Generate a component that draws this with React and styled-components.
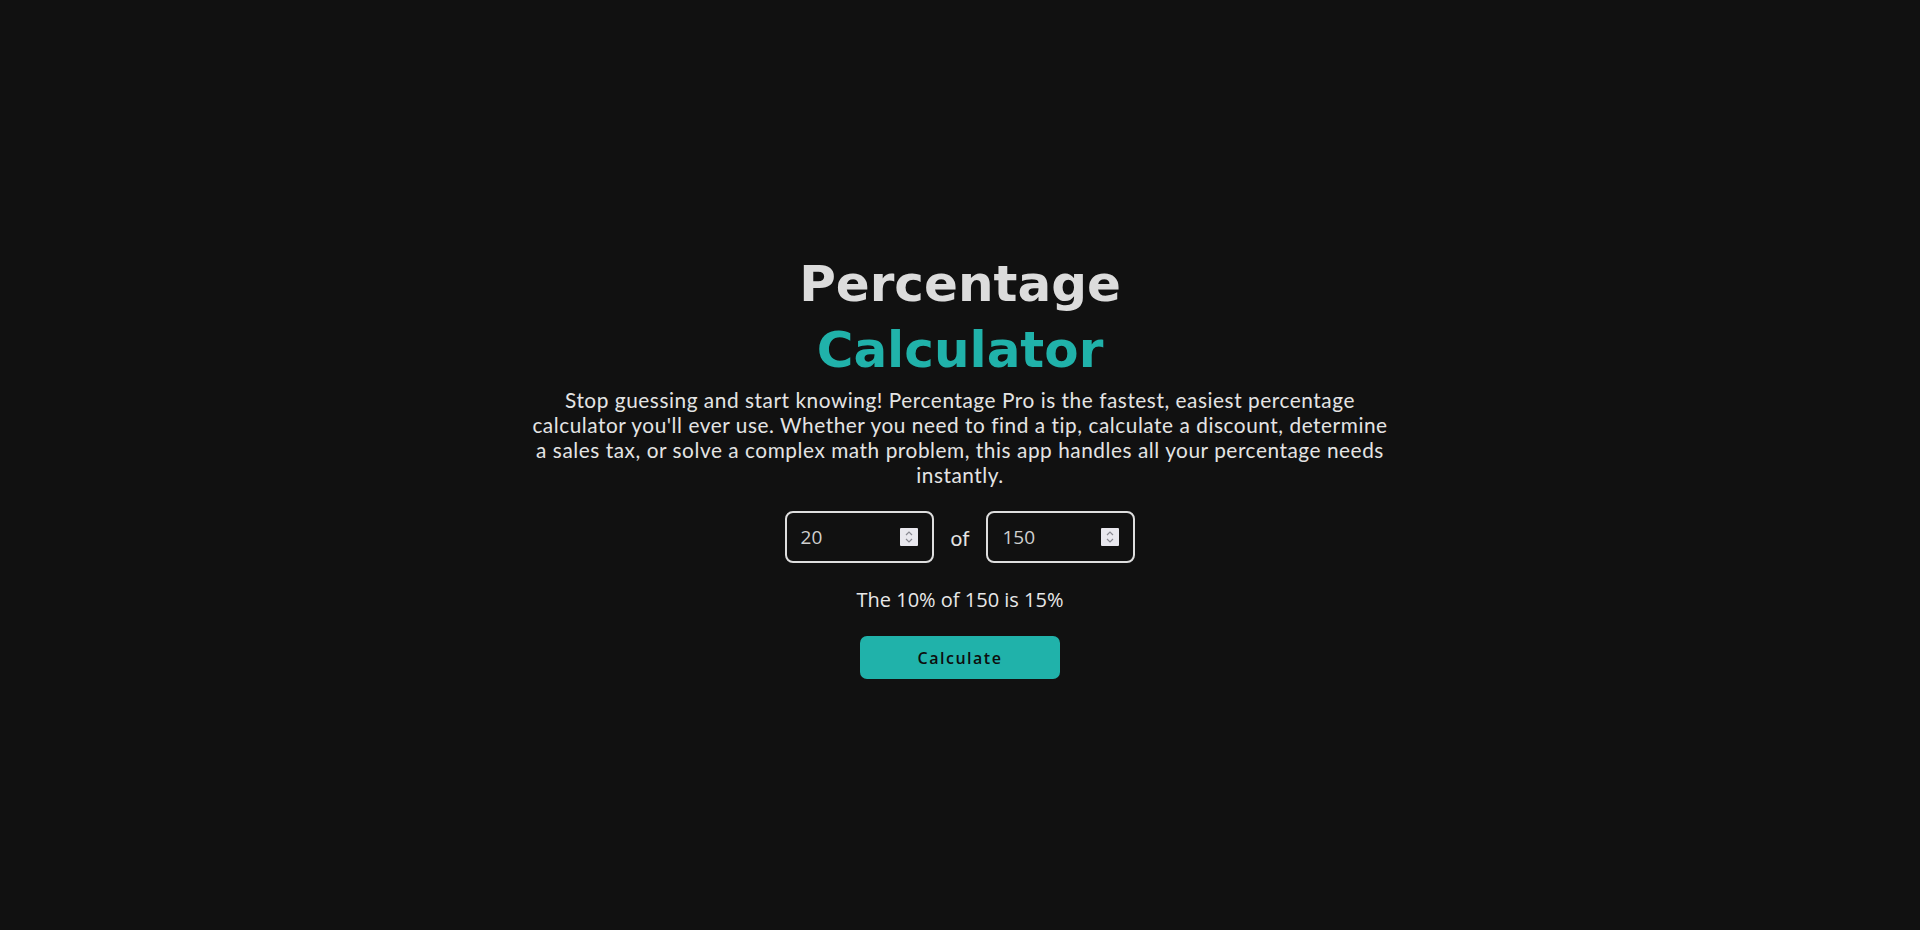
import React, { useState } from 'react';
import styled, { createGlobalStyle } from 'styled-components';

const GlobalStyle = createGlobalStyle`
  html, body {
    margin: 0;
    padding: 0;
    background-color: #111111;
  }
  * {
    box-sizing: border-box;
  }
`;

const Page = styled.main`
  min-height: 100vh;
  display: flex;
  flex-direction: column;
  align-items: center;
  justify-content: center;
  font-family: 'Lato', 'Noto Sans', sans-serif;
  color: #dcdcdc;
`;

const Title = styled.h1`
  margin: 0;
  font-family: 'DejaVu Sans', 'Lato', sans-serif;
  font-size: 50px;
  line-height: 66px;
  font-weight: 700;
  text-align: center;
  color: #dcdcdc;
`;

const Accent = styled.span`
  display: block;
  color: #20b2aa;
`;

const Description = styled.p`
  margin: 4px 0 0;
  max-width: 864px;
  font-size: 20.8px;
  letter-spacing: 0.55px;
  line-height: 25px;
  text-align: center;
  color: #e4e4e4;
`;

const InputRow = styled.div`
  display: flex;
  align-items: center;
  gap: 17px;
  margin-top: 24px;
`;

const InputBox = styled.label`
  display: flex;
  align-items: center;
  width: 149px;
  height: 52px;
  padding: 0 14px 0 14px;
  border: 2px solid #dedede;
  border-radius: 8px;
`;

const NumberInput = styled.input`
  flex: 1;
  min-width: 0;
  padding: 0;
  border: none;
  background: transparent;
  color: #cfcfcf;
  font-family: 'Open Sans', 'Noto Sans', sans-serif;
  font-size: 19px;
  outline: none;
  -moz-appearance: textfield;

  &::-webkit-outer-spin-button,
  &::-webkit-inner-spin-button {
    -webkit-appearance: none;
    margin: 0;
  }
`;

const Spinner = styled.span`
  display: flex;
  flex-direction: column;
  align-items: center;
  justify-content: center;
  width: 18px;
  height: 18px;
  background-color: #e9e8ee;
  border-radius: 1px;
`;

const Of = styled.span`
  font-size: 20.8px;
  color: #e4e4e4;
`;

const Result = styled.p`
  margin: 24px 0 0;
  font-family: 'Open Sans', 'Noto Sans', sans-serif;
  font-size: 20px;
  line-height: 25px;
  color: #e8e8e8;
`;

const CalcButton = styled.button`
  margin-top: 24px;
  width: 200px;
  height: 43px;
  border: none;
  border-radius: 7px;
  background-color: #20b2aa;
  color: #0d0d0d;
  font-family: 'Open Sans', 'Noto Sans', sans-serif;
  font-size: 16px;
  font-weight: 600;
  letter-spacing: 1.5px;
  cursor: pointer;
`;

const SpinIcon = () => (
  <svg width="10" height="14" viewBox="0 0 10 14" fill="none" stroke="#8a8a92" strokeWidth="1.2">
    <path d="M2 5 L5 2 L8 5" />
    <path d="M2 9 L5 12 L8 9" />
  </svg>
);

const App = () => {
  const [percent, setPercent] = useState('20');
  const [total, setTotal] = useState('150');

  return (
    <Page>
      <GlobalStyle />
      <Title>
        Percentage
        <Accent>Calculator</Accent>
      </Title>
      <Description>
        Stop guessing and start knowing! Percentage Pro is the fastest, easiest percentage
        calculator you'll ever use. Whether you need to find a tip, calculate a discount, determine
        a sales tax, or solve a complex math problem, this app handles all your percentage needs
        instantly.
      </Description>
      <InputRow>
        <InputBox>
          <NumberInput type="number" value={percent} onChange={(e) => setPercent(e.target.value)} />
          <Spinner><SpinIcon /></Spinner>
        </InputBox>
        <Of>of</Of>
        <InputBox>
          <NumberInput type="number" value={total} onChange={(e) => setTotal(e.target.value)} />
          <Spinner><SpinIcon /></Spinner>
        </InputBox>
      </InputRow>
      <Result>The 10% of 150 is 15%</Result>
      <CalcButton type="button">Calculate</CalcButton>
    </Page>
  );
};

export default App;
